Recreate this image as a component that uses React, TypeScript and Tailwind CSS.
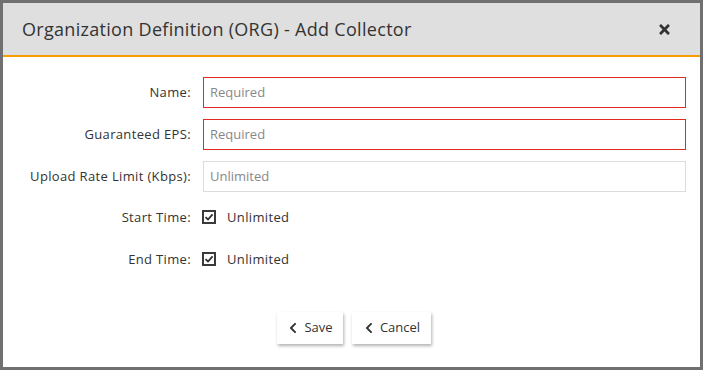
import { FaChevronLeft, FaTimes } from "react-icons/fa";

const checks = ["Start Time:", "End Time:"];

function CheckBox() {
  return (
    <span className="flex h-[14px] w-[14px] items-center justify-center border-2 border-[#3a3a3a] bg-white">
      <svg width="10" height="10" viewBox="0 0 10 10">
        <path d="M1.5 5.2 L4 7.5 L8.6 2.4" fill="none" stroke="#2f2f2f" strokeWidth="1.8" />
      </svg>
    </span>
  );
}

function Field({ label, placeholder, required }: { label: string; placeholder: string; required?: boolean }) {
  return (
    <div className="flex h-[31px] items-center">
      <label className="w-[189px] pr-[1px] text-right">{label}</label>
      <div
        className={`ml-[11px] flex h-[31px] flex-1 items-center border px-[6px] ${
          required ? "border-[#e42a1f]" : "border-[#dcdcdc]"
        }`}
      >
        <span className="tracking-normal text-[#888]">{placeholder}</span>
      </div>
    </div>
  );
}

export default function App() {
  return (
    <div
      className="flex h-[370px] w-[703px] flex-col border-[3px] border-[#707070] bg-white text-[#333]"
      style={{ fontFamily: '"Open Sans", "DejaVu Sans", sans-serif' }}
    >
      {/* Header */}
      <div className="flex h-[54px] shrink-0 items-center justify-between border-b-2 border-[#f79d00] bg-[#dfdfdf] pl-[19px] pr-[28px]">
        <h1 className="text-[18px] tracking-[0.3px] text-[#333]">
          Organization Definition (ORG) - Add Collector
        </h1>
        <FaTimes className="text-[15px] text-[#333]" />
      </div>

      {/* Form */}
      <div className="flex flex-col gap-[11px] pt-[20px] pr-[14px] text-[13px] tracking-[0.35px]">
        <Field label="Name:" placeholder="Required" required />
        <Field label="Guaranteed EPS:" placeholder="Required" required />
        <Field label="Upload Rate Limit (Kbps):" placeholder="Unlimited" />
        {checks.map((c) => (
          <div key={c} className="flex h-[31px] items-start pt-[5px]">
            <label className="w-[189px] pr-[1px] text-right leading-[18px]">{c}</label>
            <div className="ml-[10px] flex items-center gap-[11px] pt-[2px]">
              <CheckBox />
              <span className="leading-[14px]">Unlimited</span>
            </div>
          </div>
        ))}
      </div>

      {/* Buttons */}
      <div className="mt-[36px] flex justify-center gap-[9px] pl-[5px] text-[13px]">
        <button className="flex h-[32px] w-[66px] items-center justify-center gap-[5px] bg-white shadow-[1px_2px_3px_rgba(0,0,0,0.3)]">
          <FaChevronLeft className="text-[12px]" />
          Save
        </button>
        <button className="flex h-[32px] w-[79px] items-center justify-center gap-[5px] bg-white shadow-[1px_2px_3px_rgba(0,0,0,0.3)]">
          <FaChevronLeft className="text-[12px]" />
          Cancel
        </button>
      </div>
    </div>
  );
}
